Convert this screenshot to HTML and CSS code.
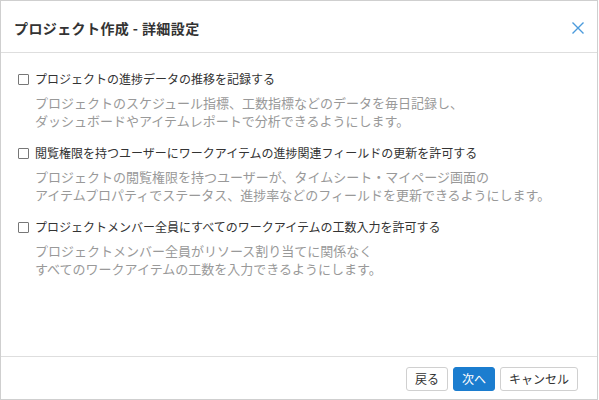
FILE: index.html
```html
<!DOCTYPE html>
<html lang="ja">
<head>
<meta charset="utf-8">
<link rel="stylesheet" href="styles.css">
</head>
<body>
<div class="dialog">
  <div class="header">
    <div class="title">プロジェクト作成 - 詳細設定</div>
    <button class="close" aria-label="閉じる">
      <svg width="12" height="12" viewBox="0 0 12 12"><path d="M0.5 0.5 L11.5 11.5 M11.5 0.5 L0.5 11.5" stroke="#4b9bdc" stroke-width="1.4" fill="none"/></svg>
    </button>
  </div>
  <div class="body">
    <div class="option">
      <label class="label"><span class="check"></span>プロジェクトの進捗データの推移を記録する</label>
      <div class="desc">プロジェクトのスケジュール指標、工数指標などのデータを毎日記録し、<br>ダッシュボードやアイテムレポートで分析できるようにします。</div>
    </div>
    <div class="option">
      <label class="label"><span class="check"></span>閲覧権限を持つユーザーにワークアイテムの進捗関連フィールドの更新を許可する</label>
      <div class="desc">プロジェクトの閲覧権限を持つユーザーが、タイムシート・マイページ画面の<br>アイテムプロパティでステータス、進捗率などのフィールドを更新できるようにします。</div>
    </div>
    <div class="option">
      <label class="label"><span class="check"></span>プロジェクトメンバー全員にすべてのワークアイテムの工数入力を許可する</label>
      <div class="desc">プロジェクトメンバー全員がリソース割り当てに関係なく<br>すべてのワークアイテムの工数を入力できるようにします。</div>
    </div>
  </div>
  <div class="footer">
    <button class="btn">戻る</button>
    <button class="btn primary">次へ</button>
    <button class="btn">キャンセル</button>
  </div>
</div>
</body>
</html>
```
FILE: styles.css
```css
html, body {
  margin: 0;
  padding: 0;
  background: #fff;
}
body {
  font-family: "Noto Sans CJK JP", "Noto Sans", sans-serif;
  color: #333;
}
.dialog {
  box-sizing: border-box;
  width: 598px;
  height: 400px;
  border: 1px solid #cfcfcf;
  display: flex;
  flex-direction: column;
  background: #fff;
}
.header {
  box-sizing: border-box;
  height: 52px;
  border-bottom: 1px solid #dedede;
  display: flex;
  align-items: center;
  justify-content: space-between;
  padding: 2px 13px 0 13px;
}
.title {
  font-size: 14px;
  font-weight: bold;
  color: #333;
  line-height: 20px;
  letter-spacing: 0.4px;
}
.close {
  border: 0;
  background: none;
  padding: 0;
  width: 14px;
  height: 14px;
  display: flex;
  align-items: center;
  justify-content: center;
  margin-right: -1px;
  cursor: pointer;
}
.body {
  flex: 1;
  padding: 17px 16px 0 16px;
  display: flex;
  flex-direction: column;
  gap: 14px;
}
.label {
  display: flex;
  align-items: center;
  font-size: 12px;
  line-height: 18px;
  color: #333;
}
.check {
  box-sizing: border-box;
  width: 11px;
  height: 11px;
  border: 1px solid #777;
  border-radius: 1px;
  margin-left: 1px;
  margin-right: 6px;
  background: #fff;
}
.desc {
  margin-top: 6px;
  padding-left: 18px;
  font-size: 13px;
  line-height: 18px;
  color: #999;
}
.footer {
  border-top: 1px solid #dedede;
  display: flex;
  justify-content: flex-end;
  gap: 5px;
  padding: 10px 19px 8px 0;
}
.btn {
  font-family: inherit;
  font-size: 12px;
  height: 24px;
  line-height: 22px;
  padding: 0 8px;
  border: 1px solid #d0d0d0;
  border-radius: 3px;
  background: #fff;
  color: #333;
}
.btn.primary {
  background: #1b7dcf;
  border-color: #1b7dcf;
  color: #fff;
}
```
